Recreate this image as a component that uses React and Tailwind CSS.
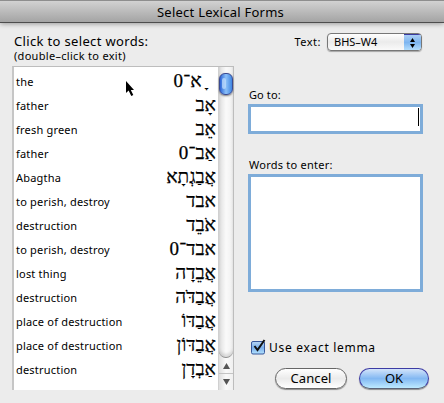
import React, { useState } from 'react';

const WORDS = [
  { gloss: 'the', lemma: '\u00a0\u00a0ָ\u00a0א־0' },
  { gloss: 'father', lemma: 'אָב' },
  { gloss: 'fresh green', lemma: 'אֵב' },
  { gloss: 'father', lemma: 'אַב־0' },
  { gloss: 'Abagtha', lemma: 'אֲבַגְתָא' },
  { gloss: 'to perish, destroy', lemma: 'אבד' },
  { gloss: 'destruction', lemma: 'אֹבֵד' },
  { gloss: 'to perish, destroy', lemma: 'אבד־0' },
  { gloss: 'lost thing', lemma: 'אֲבֵדָה' },
  { gloss: 'destruction', lemma: 'אֲבַדֹּה' },
  { gloss: 'place of destruction', lemma: 'אֲבַדּוֹ' },
  { gloss: 'place of destruction', lemma: 'אֲבַדּוֹן' },
  { gloss: 'destruction', lemma: 'אַבְדָן' },
];

const TitleBar = () => (
  <header className="h-[23px] shrink-0 border-t border-b border-t-[#8e8e8e] border-b-[#4d4d4d] bg-linear-to-b from-[#d2d2d2] to-[#a4a4a4] pr-[3px] text-center text-[13px] leading-[22px] tracking-[0.24px] shadow-[0_1px_5px_rgba(0,0,0,0.35)]">
    Select Lexical Forms
  </header>
);

const ScrollBar = () => (
  <div className="flex w-[15px] shrink-0 flex-col border-l border-[#d0d0d0] bg-linear-to-r from-[#dedede] via-[#fafafa] to-[#f0f0f0]">
    <div className="flex grow flex-col rounded-b-[8px] border-b border-[#8c8c8c] pt-[6px] shadow-[inset_0_-3px_3px_rgba(0,0,0,0.12)]">
      <div className="flex h-[22px] w-[14px] rounded-[6px] border border-[#3b4a90] bg-linear-to-r from-[#2c62d4] via-[#8cc0f8] to-[#3f86e2] pt-[4px] pl-[2px] shadow-[0_1px_2px_rgba(0,0,0,0.5)]">
        <span className="h-[11px] w-[4px] rounded-[2px] bg-[#c4e0fd]/70" />
      </div>
    </div>
    <div className="flex h-[16px] items-center justify-center border-b border-[#c4c4c4]">
      <svg width="7" height="6" viewBox="0 0 7 6" fill="#555"><path d="M3.5 0 7 6H0z" /></svg>
    </div>
    <div className="flex h-[16px] items-center justify-center">
      <svg width="7" height="6" viewBox="0 0 7 6" fill="#555"><path d="M0 0h7L3.5 6z" /></svg>
    </div>
  </div>
);

const WordList = () => (
  <div className="mt-[4px] flex h-[324px] w-[222px] border-t border-r border-l-2 border-t-[#bdbdbd] border-r-[#bdbdbd] border-l-[#c6c6c6] bg-white">
    <ul className="min-w-0 grow pt-[3px]">
      {WORDS.map((word, index) => (
        <li key={index} className="flex h-[24px] justify-between pr-[2px] pl-[2px]">
          <span className="text-[11px] leading-[24px] tracking-[0.2px]">{word.gloss}</span>
          <span dir="rtl" lang="he" className="font-['Liberation_Serif',serif] text-[19px] leading-[22px] whitespace-nowrap [-webkit-text-stroke:0.25px_black]">
            {word.lemma}
          </span>
        </li>
      ))}
    </ul>
    <ScrollBar />
  </div>
);

const TextPopup = () => (
  <div className="flex justify-end gap-[6px] pr-[22px]">
    <span className="text-[11px] leading-[18px] tracking-[0.5px]">Text:</span>
    <button className="flex h-[18px] w-[95px] overflow-hidden rounded-[4px] border border-[#777] bg-linear-to-b from-white via-[#ebebeb] to-[#fafafa] shadow-[0_1px_1px_rgba(0,0,0,0.3)]">
      <span className="grow pl-[6px] text-left text-[11px] leading-[16px]">BHS–W4</span>
      <span className="flex h-full w-[17px] items-center justify-center border-t border-[#3a3aa0] bg-linear-to-b from-[#a9cdf5] via-[#7db5f0] to-[#b4defd]">
        <svg width="5" height="10" viewBox="0 0 5 10"><path d="M2.5 0 5 4H0zM0 6h5L2.5 10z" /></svg>
      </span>
    </button>
  </div>
);

const App = () => {
  const [exact, setExact] = useState(true);

  return (
    <div className="relative flex h-[403px] w-[444px] flex-col overflow-hidden bg-[#ececec] font-['Noto_Sans',sans-serif] text-black">
      <TitleBar />
      <main className="flex">
        <section className="pt-[10px] pl-[12px]">
          <h1 className="pl-[2px] text-[13px] leading-[16px] tracking-[0.34px]">Click to select words:</h1>
          <p className="pt-px pl-[2px] text-[11px] leading-[12px] tracking-[0.3px]">(double–click to exit)</p>
          <WordList />
        </section>
        <section className="grow pt-[10px] pl-[14px]">
          <TextPopup />
          <p className="mt-[36px] pl-px text-[11px] leading-[16px] tracking-[0.1px]">Go to:</p>
          <div className="mt-[1px] flex h-[30px] w-[175px] justify-end border-[3px] border-[#7eacd9] bg-white pt-px pr-px">
            <span className="h-[18px] w-px bg-black" />
          </div>
          <p className="mt-[23px] pl-px text-[11px] leading-[16px] tracking-[0.24px]">Words to enter:</p>
          <div className="mt-[1px] h-[118px] w-[175px] border-[3px] border-[#7eacd9] bg-white" />
          <button onClick={() => setExact(!exact)} className="mt-[46px] ml-[3px] flex h-[18px] items-end gap-[3px]">
            <svg width="15" height="17" viewBox="0 0 15 17">
              <defs>
                <linearGradient id="box" x2="0" y2="1">
                  <stop stopColor="#b9d7f5" />
                  <stop offset=".5" stopColor="#79aeeb" />
                  <stop offset="1" stopColor="#b5e4ff" />
                </linearGradient>
              </defs>
              <rect x=".5" y="2.5" width="13" height="12.5" rx="1.5" fill="url(#box)" stroke="#37579b" />
              {exact && <path d="M3.5 7 6.5 11 13.5 1" fill="none" stroke="#111" strokeWidth="2" />}
            </svg>
            <span className="text-[12px] leading-[16px] tracking-[0.7px]">Use exact lemma</span>
          </button>
          <div className="mt-[12px] ml-[27px] flex gap-[12px]">
            <button className="h-[21px] w-[72px] rounded-full border border-[#666] bg-linear-to-b from-white from-0% via-[#ebebeb] via-50% to-white text-[13px] leading-[19px] tracking-[0.1px] shadow-[0_1px_1px_rgba(0,0,0,0.4)]">
              Cancel
            </button>
            <button className="h-[21px] w-[70px] rounded-full border border-[#3d3ba4] border-b-[#5b6478] bg-linear-to-b from-[#d3e4fa] from-0% via-[#83b8f2] via-50% to-[#bdeaff] text-[13px] leading-[19px] shadow-[0_1px_1px_rgba(0,0,0,0.4)]">
              OK
            </button>
          </div>
        </section>
      </main>
      {/* mouse pointer */}
      <svg className="absolute top-[81px] left-[126px]" width="9" height="16" viewBox="0 0 9 16">
        <path d="M0 0v12l2.6-2.4L5.3 15l2-1-2.5-5H8z" />
      </svg>
    </div>
  );
};

export default App;
